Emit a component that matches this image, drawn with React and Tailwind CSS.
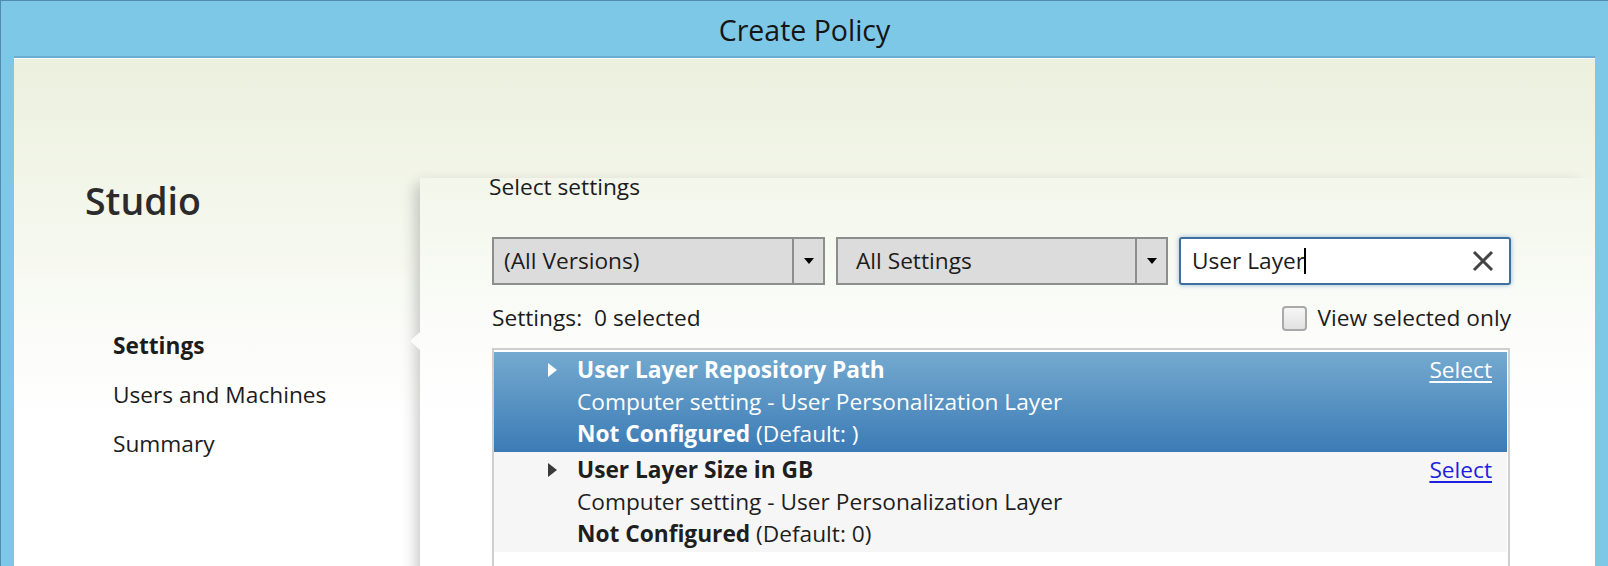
import React from "react";
import clsx from "clsx";

const navItems = [
  { label: "Settings", active: true },
  { label: "Users and Machines" },
  { label: "Summary" },
];

const settings = [
  { title: "User Layer Repository Path", def: "(Default: )", selected: true },
  { title: "User Layer Size in GB", def: "(Default: 0)" },
];

const Dropdown = ({ value, width, textPad }) => (
  <div
    className={clsx(
      "flex h-[48px] border-2 border-[#8d8d8d] bg-[#dcdcdc]",
      width
    )}
  >
    <div className={clsx("flex flex-1 items-center", textPad)}>{value}</div>
    <div className="flex w-[31px] items-center justify-center border-l-2 border-[#8d8d8d]">
      <div className="h-0 w-0 border-x-[5px] border-t-[6px] border-x-transparent border-t-black" />
    </div>
  </div>
);

const SettingRow = ({ title, def, selected }) => (
  <div
    className={clsx(
      "flex h-[100px] pt-[2px] leading-[32px]",
      selected
        ? "bg-gradient-to-b from-[#74aad0] to-[#3b7bb5] text-white"
        : "bg-[#f6f6f6] text-[#1e1e1e]"
    )}
  >
    <div className="flex h-[32px] w-[83px] items-center pl-[54px]">
      <div
        className={clsx(
          "h-0 w-0 border-y-[7px] border-l-[9px] border-y-transparent",
          selected ? "border-l-white" : "border-l-[#3a3a3a]"
        )}
      />
    </div>
    <div className="flex-1">
      <div className="font-bold">{title}</div>
      <div>Computer setting - User Personalization Layer</div>
      <div>
        <span className="font-bold">Not Configured</span> {def}
      </div>
    </div>
    <div
      className={clsx(
        "pr-[15px] underline underline-offset-[3px]",
        selected ? "text-white" : "text-[#1f1fe0]"
      )}
    >
      Select
    </div>
  </div>
);

export default function App() {
  return (
    <div className="flex h-[566px] w-[1608px] flex-col overflow-hidden border-t border-l border-[#4f8cb0] bg-[#7ec8e7] px-[13px] font-['Open_Sans',sans-serif] text-[22.7px] text-[#1c1c1c]">
      {/* title bar */}
      <div className="flex h-[57px] shrink-0 items-center justify-center border-b-2 border-[#6aaed3] pt-[3px] text-[28.5px] text-[#151515]">
        Create Policy
      </div>

      {/* content */}
      <div className="flex flex-1 border-t border-white bg-[linear-gradient(to_bottom,#ecf0de_0px,#f4f7ec_160px,#fbfcf9_280px,#ffffff_360px)]">
        {/* left nav */}
        <div className="w-[406px] shrink-0">
          <div className="mt-[120px] pl-[71px] text-[37.5px] font-semibold leading-[44px] text-[#2b2b2b]">
            Studio
          </div>
          <div className="mt-[98px] pl-[99px]">
            {navItems.map((item) => (
              <div
                key={item.label}
                className={clsx(
                  "h-[49px] leading-[49px]",
                  item.active && "font-bold"
                )}
              >
                {item.label}
              </div>
            ))}
          </div>
        </div>

        {/* right panel */}
        <div className="relative mt-[119px] flex-1 bg-gradient-to-b from-white/10 to-white/50 pl-[72px] shadow-[-10px_0_14px_-6px_rgba(0,0,0,0.22)]">
          <div className="absolute left-[-10px] top-[154px] h-0 w-0 border-y-[9px] border-r-[10px] border-y-transparent border-r-[#fbfbfb]" />

          <div className="-ml-[3px] -mt-[6px] leading-[30px]">Select settings</div>

          <div className="mt-[35px] flex gap-[11px]">
            <Dropdown value="(All Versions)" width="w-[333px]" textPad="pl-[10px]" />
            <Dropdown value="All Settings" width="w-[332px]" textPad="pl-[18px]" />
            <div className="flex h-[48px] w-[332px] items-center rounded-[3px] border-2 border-[#3f6f9f] bg-white pl-[11px] pr-[15px] shadow-[0_0_5px_rgba(70,130,190,0.55)]">
              <span>User Layer</span>
              <span className="-ml-[1px] inline-block h-[26px] w-[2px] bg-black" />
              <svg
                className="ml-auto"
                width="22"
                height="22"
                viewBox="0 0 22 22"
                fill="none"
                stroke="#444"
                strokeWidth="3"
              >
                <path d="M2 2 L20 20 M20 2 L2 20" />
              </svg>
            </div>
          </div>

          <div className="mt-[18px] flex h-[30px] w-[1019px] items-center">
            <span className="font-medium">Settings:</span>
            <span className="ml-[12px]">0 selected</span>
            <div className="ml-auto flex items-center">
              <div className="h-[25px] w-[25px] rounded-[4px] border-2 border-[#a9a9a9] bg-gradient-to-b from-[#f6f6f6] to-[#e2e2e2]" />
              <span className="ml-[10px]">View selected only</span>
            </div>
          </div>

          <div className="mt-[15px] h-[300px] w-[1018px] border-2 border-[#cfcfcf] bg-white pr-[1px] pt-[2px]">
            {settings.map((s) => (
              <SettingRow key={s.title} {...s} />
            ))}
          </div>
        </div>
      </div>
    </div>
  );
}
